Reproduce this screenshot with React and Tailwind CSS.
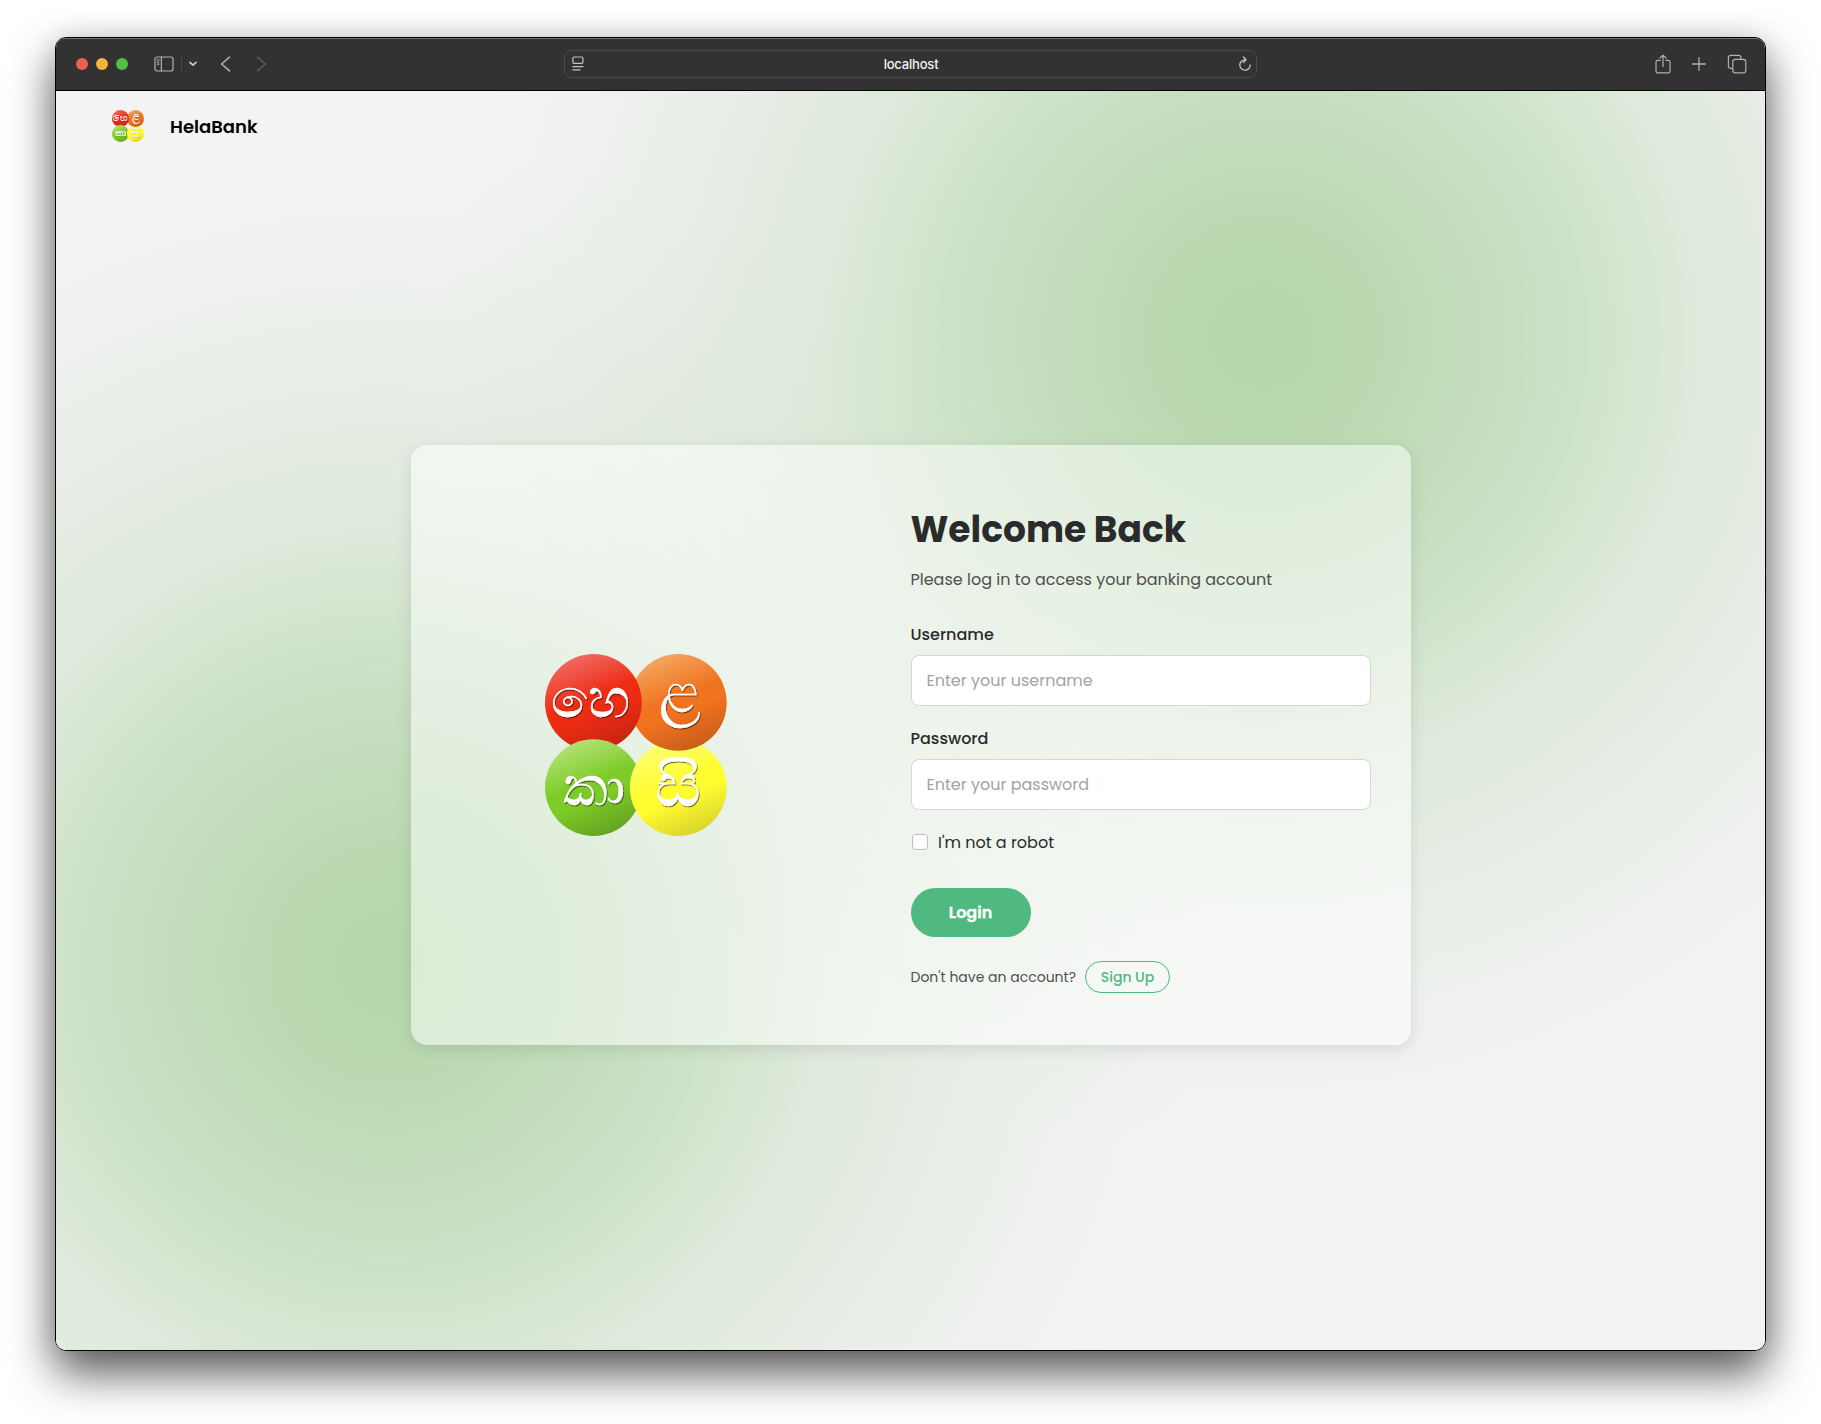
import { useId } from "react";

function Glyph({ x, y, w, size, children }) {
  return (
    <text x={x} y={y} textLength={w} lengthAdjust="spacingAndGlyphs" fontSize={size} fill="#fff" stroke="#fff" strokeWidth="0.5" fontFamily="LKLUG, serif">
      {children}
    </text>
  );
}

function Logo({ className }) {
  const id = useId();
  const colors = {
    red: ["#f0655c", "#ee2c14", "#c42412"],
    orange: ["#f4a35c", "#f0731f", "#c65c18"],
    green: ["#b0e070", "#7ccb28", "#64a020"],
    yellow: ["#ffff70", "#fffc30", "#d6d22c"],
  };
  return (
    <svg viewBox="0 0 182 182" className={className}>
      <defs>
        {Object.entries(colors).map(([name, c]) => (
          <linearGradient key={name} id={id + name} x1="0.3" y1="0" x2="0.7" y2="1">
            <stop offset="0.05" stopColor={c[0]} />
            <stop offset="0.45" stopColor={c[1]} />
            <stop offset="0.6" stopColor={c[1]} />
            <stop offset="1" stopColor={c[2]} />
          </linearGradient>
        ))}
        <clipPath id={id + "clip"}>
          <rect x="98" y="60" width="84" height="60" />
        </clipPath>
        <filter id={id + "shadow"} x="-10%" y="-10%" width="130%" height="130%">
          <feDropShadow dx="0.8" dy="1.1" stdDeviation="0.7" floodColor="#000" floodOpacity="0.6" />
        </filter>
      </defs>
      <circle cx="133.3" cy="48.4" r="48.4" fill={`url(#${id}orange)`} />
      <circle cx="48.4" cy="48.4" r="48.4" fill={`url(#${id}red)`} />
      <circle cx="48.4" cy="133.6" r="48.4" fill={`url(#${id}green)`} />
      <circle cx="133.3" cy="133.6" r="48.4" fill={`url(#${id}yellow)`} />
      <circle cx="133.3" cy="48.4" r="48.4" fill={`url(#${id}orange)`} clipPath={`url(#${id}clip)`} />
      <g filter={`url(#${id}shadow)`}>
        <Glyph x="6.5" y="62.5" w="79" size="54">හෙ</Glyph>
        <Glyph x="114" y="58" w="42" size="60">ළ</Glyph>
        <Glyph x="17.5" y="150.5" w="63" size="54">කා</Glyph>
        <Glyph x="110" y="151.5" w="46" size="61">සි</Glyph>
      </g>
    </svg>
  );
}

function Toolbar() {
  return (
    <div className="flex h-[53px] shrink-0 items-center border-t border-b border-t-[#6f6f6f] border-b-black bg-[#323232] pb-[2px] text-[#b0b0b0]">
      <div className="ml-5 flex w-[488px] items-center">
        <div className="flex gap-2">
          <span className="size-3 rounded-full bg-[#ed5f52]" />
          <span className="size-3 rounded-full bg-[#f5b43c]" />
          <span className="size-3 rounded-full bg-[#53bf45]" />
        </div>
        <svg className="ml-[26px] h-4 w-5" viewBox="0 0 20 16" fill="none" stroke="currentColor" strokeWidth="1.2">
          <rect x="1" y="1" width="18" height="14" rx="2" />
          <path d="M7.3 1v14M2.8 3.8h2.6M2.8 6h2.6M2.8 8.2h2.6" />
        </svg>
        <span className="ml-[7px] h-[18px] w-px bg-[#444]" />
        <svg className="ml-[7px] h-[6px] w-2" viewBox="0 0 8 6" fill="none" stroke="#d0d0d0" strokeWidth="1.6" strokeLinecap="round" strokeLinejoin="round">
          <path d="M1 1.4l3 2.8 3-2.8" />
        </svg>
        <svg className="ml-[23px] h-4 w-[11px]" viewBox="0 0 11 16" fill="none" stroke="currentColor" strokeWidth="1.6" strokeLinecap="round" strokeLinejoin="round">
          <path d="M9.5 1.2L1.6 8l7.9 6.8" />
        </svg>
        <svg className="ml-[25px] h-4 w-[11px]" viewBox="0 0 11 16" fill="none" stroke="#595959" strokeWidth="1.6" strokeLinecap="round" strokeLinejoin="round">
          <path d="M1.5 1.2L9.4 8l-7.9 6.8" />
        </svg>
      </div>
      <div className="flex h-7 w-[693px] items-center justify-between rounded-[7px] border border-[#4a4a4a] pr-[4px] pl-[7px]">
        <svg className="h-[15px] w-3" viewBox="0 0 12 15" fill="none" stroke="#c4c4c4" strokeWidth="1.2">
          <rect x="0.9" y="1" width="10" height="6.4" rx="1.2" />
          <path d="M0.4 10.6h11M0.4 13.8h8" />
        </svg>
        <span className="pt-px font-['Inter',sans-serif] text-[13px] leading-none font-medium tracking-[-0.2px] text-[#f2f2f2]">localhost</span>
        <svg className="h-4 w-[14px]" viewBox="0 0 14 16" fill="none" stroke="#c4c4c4" strokeWidth="1.3" strokeLinecap="round" strokeLinejoin="round">
          <path d="M7.2 3.8A5.2 5.2 0 1 0 12.2 9M5.4 1l2.6 2.8-2.6 2.7" />
        </svg>
      </div>
      <div className="ml-auto flex items-center pr-[18px]">
        <svg className="h-5 w-4" viewBox="0 0 16 20" fill="none" stroke="currentColor" strokeWidth="1.2" strokeLinecap="round" strokeLinejoin="round">
          <path d="M5 6.4H2.6A1.6 1.6 0 0 0 1 8v9.2a1.6 1.6 0 0 0 1.6 1.6h10.8a1.6 1.6 0 0 0 1.6-1.6V8a1.6 1.6 0 0 0-1.6-1.6H11M8 12.6V1.2M5 4l3-2.9L11 4" />
        </svg>
        <svg className="ml-[21px] size-[14px]" viewBox="0 0 14 14" fill="none" stroke="currentColor" strokeWidth="1.3" strokeLinecap="round">
          <path d="M7 0.7v12.6M0.7 7h12.6" />
        </svg>
        <svg className="ml-[21px] size-5" viewBox="0 0 20 20" fill="none" stroke="currentColor" strokeWidth="1.2" strokeLinejoin="round">
          <rect x="5.8" y="5.4" width="13" height="13.4" rx="2.4" />
          <path d="M5.6 14.4H3.6a2.2 2.2 0 0 1-2.2-2.2V3.6a2.2 2.2 0 0 1 2.2-2.2h8.2A2.2 2.2 0 0 1 14 3.6v1.6" />
        </svg>
      </div>
    </div>
  );
}

function Field({ label, ...props }) {
  return (
    <label className="block">
      <span className="block text-[16px] leading-6 font-medium text-[#2b2b2b]">{label}</span>
      <input
        {...props}
        className="mt-2 block h-[51px] w-full rounded-lg border border-[#d6d6d6] bg-white px-[15px] pb-px text-[16px] placeholder:text-[#a3a3a3]"
      />
    </label>
  );
}

function LoginCard() {
  return (
    <div className="flex h-[600px] w-[1000px] rounded-2xl bg-white/50 shadow-[0_4px_16px_rgba(0,0,0,0.1)]">
      <div className="flex flex-1 items-center pl-[134px]">
        <Logo className="size-[182px]" />
      </div>
      <form className="w-[500px] pt-[58px] pr-10" onSubmit={(e) => e.preventDefault()}>
        <h1 className="text-[36px] leading-[54px] font-bold text-[#2b2b2b]">Welcome Back</h1>
        <p className="mt-[11px] text-[16px] leading-6 text-[#4f4f4f]">Please log in to access your banking account</p>
        <div className="mt-[31px] flex flex-col gap-[21px]">
          <Field label="Username" type="text" placeholder="Enter your username" />
          <Field label="Password" type="password" placeholder="Enter your password" />
        </div>
        <label className="mt-[21px] flex items-center text-[16px] leading-6 text-[#2b2b2b]">
          <input type="checkbox" className="-mt-[2px] ml-px size-4 appearance-none rounded-[4px] border border-[#bdbdbd] bg-white" />
          <span className="ml-[10.5px]">I'm not a robot</span>
        </label>
        <button className="mt-[33px] block h-[49px] w-[120px] rounded-full bg-[#4fb97f] text-[16px] font-semibold text-white [-webkit-text-stroke:0.3px_white]">Login</button>
        <div className="mt-6 flex items-center gap-[9px] text-[14px] leading-[21px] text-[#4f4f4f]">
          Don't have an account?
          <a href="#signup" className="flex h-8 w-[85px] items-center justify-center rounded-full border border-[#4fb97f] font-medium text-[#4fb97f]">
            Sign Up
          </a>
        </div>
      </form>
    </div>
  );
}

export default function App() {
  return (
    <div className="flex h-[1424px] w-[1821px] overflow-hidden bg-white pt-[37px] pl-[55px] font-['Poppins',sans-serif]">
      <div className="flex h-[1314px] w-[1711px] flex-col overflow-hidden rounded-[11px] border border-black shadow-[0_22px_46px_rgba(0,0,0,0.65),0_0_30px_rgba(0,0,0,0.1)]">
        <Toolbar />
        <div className="flex flex-1 flex-col bg-[#f3f3f3] bg-[radial-gradient(circle_at_1207px_245px,rgba(177,213,167,0.95)_0px,rgba(177,213,167,0.86)_116px,rgba(177,213,167,0.66)_260px,rgba(177,213,167,0.49)_350px,rgba(177,213,167,0.31)_443px,rgba(177,213,167,0.15)_590px,rgba(177,213,167,0.05)_720px,rgba(177,213,167,0)_820px),radial-gradient(circle_at_332px_873px,rgba(177,213,167,0.95)_0px,rgba(177,213,167,0.86)_116px,rgba(177,213,167,0.66)_260px,rgba(177,213,167,0.49)_350px,rgba(177,213,167,0.31)_443px,rgba(177,213,167,0.15)_590px,rgba(177,213,167,0.05)_720px,rgba(177,213,167,0)_820px)]">
          <header className="flex h-[71px] items-center pl-14">
            <Logo className="-mt-px size-8" />
            <span className="ml-[26px] text-[18px] leading-7 font-semibold text-black">HelaBank</span>
          </header>
          <main className="flex justify-center pt-[283px]">
            <LoginCard />
          </main>
        </div>
      </div>
    </div>
  );
}
